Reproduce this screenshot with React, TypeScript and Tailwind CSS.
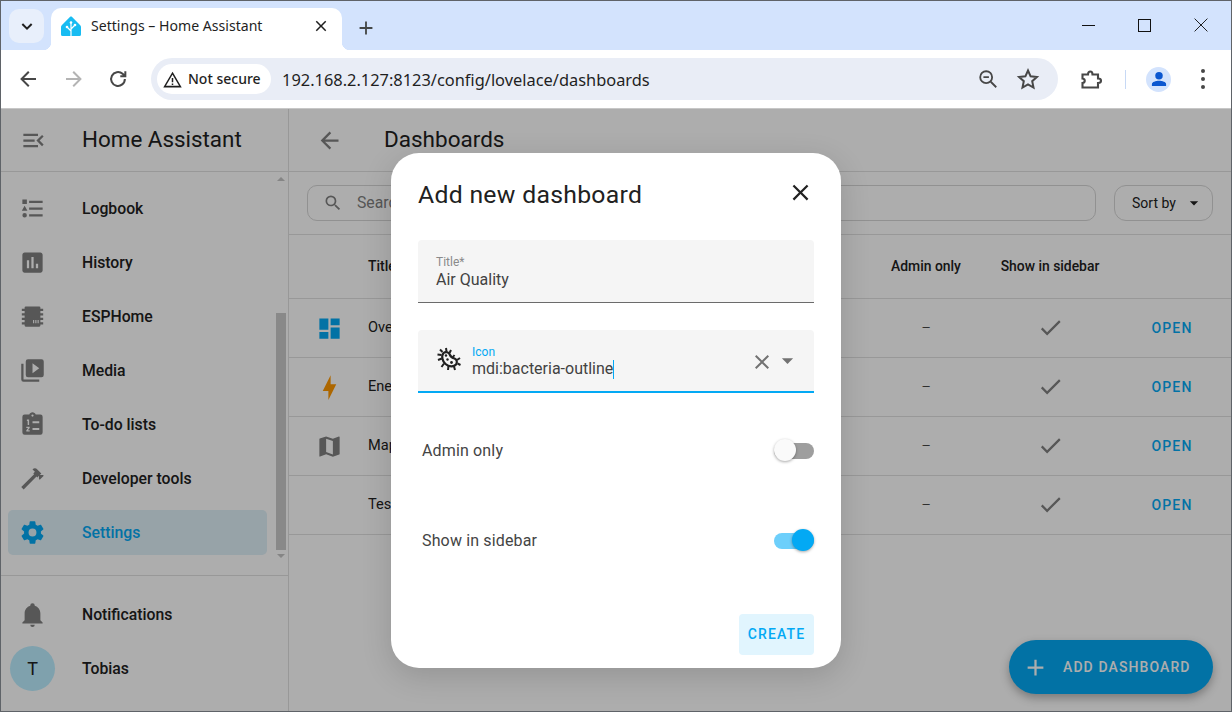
import type { ReactNode } from 'react'

const mdi = {
  menuOpen: 'M21,15.61L19.59,17L14.58,12L19.59,7L21,8.39L17.44,12L21,15.61M3,6H16V8H3V6M3,13V11H13V13H3M3,18V16H16V18H3Z',
  logbook: 'M5,9.5L7.5,14H2.5L5,9.5M3,4H7V8H3V4M5,20A2,2 0 0,0 7,18A2,2 0 0,0 5,16A2,2 0 0,0 3,18A2,2 0 0,0 5,20M9,5V7H21V5H9M9,19H21V17H9V19M9,13H21V11H9V13Z',
  history: 'M19 3H5C3.9 3 3 3.9 3 5V19C3 20.1 3.9 21 5 21H19C20.1 21 21 20.1 21 19V5C21 3.9 20.1 3 19 3M9 17H7V10H9V17M13 17H11V7H13V17M17 17H15V13H17V17Z',
  chip: 'M6 3H18A1 1 0 0 1 19 4V5H21.5V7H19V9H21.5V11H19V13H21.5V15H19V17H21.5V19H19V20A1 1 0 0 1 18 21H6A1 1 0 0 1 5 20V19H2.5V17H5V15H2.5V13H5V11H2.5V9H5V7H2.5V5H5V4A1 1 0 0 1 6 3M12.5 15V18H13.5V15H12.5M14.5 15V18H15.5V15H14.5M16.5 15V18H17.5V15H16.5Z',
  media: 'M4,6H2V20A2,2 0 0,0 4,22H18V20H4V6M20,2H8A2,2 0 0,0 6,4V16A2,2 0 0,0 8,18H20A2,2 0 0,0 22,16V4A2,2 0 0,0 20,2M12,14.5V5.5L18,10L12,14.5Z',
  todo: 'M19,3H14.82C14.4,1.84 13.3,1 12,1C10.7,1 9.6,1.84 9.18,3H5A2,2 0 0,0 3,5V19A2,2 0 0,0 5,21H19A2,2 0 0,0 21,19V5A2,2 0 0,0 19,3M12,3A1,1 0 0,1 13,4A1,1 0 0,1 12,5A1,1 0 0,1 11,4A1,1 0 0,1 12,3M7,7.5H9V12.5H7.7V8.8H7V7.5M12,9H18V10.8H12V9M6.5,14H9.5V15.2L7.9,17H9.5V18.2H6.5V17.1L8.1,15.2H6.5V14M12,15H18V16.8H12V15Z',
  hammer: 'M2 19.63L13.43 8.2L12.72 7.5L14.14 6.07L12 3.89C13.2 2.7 15.09 2.7 16.27 3.89L19.87 7.5L18.45 8.91H21.29L22 9.62L18.45 13.21L17.74 12.5V9.62L16.27 11.04L15.56 10.33L4.13 21.76L2 19.63Z',
  cog: 'M12,15.5A3.5,3.5 0 0,1 8.5,12A3.5,3.5 0 0,1 12,8.5A3.5,3.5 0 0,1 15.5,12A3.5,3.5 0 0,1 12,15.5M19.43,12.97C19.47,12.65 19.5,12.33 19.5,12C19.5,11.67 19.47,11.34 19.43,11L21.54,9.37C21.73,9.22 21.78,8.95 21.66,8.73L19.66,5.27C19.54,5.05 19.27,4.96 19.05,5.05L16.56,6.05C16.04,5.66 15.5,5.32 14.87,5.07L14.5,2.42C14.46,2.18 14.25,2 14,2H10C9.75,2 9.54,2.18 9.5,2.42L9.13,5.07C8.5,5.32 7.96,5.66 7.44,6.05L4.95,5.05C4.73,4.96 4.46,5.05 4.34,5.27L2.34,8.73C2.21,8.95 2.27,9.22 2.46,9.37L4.57,11C4.53,11.34 4.5,11.67 4.5,12C4.5,12.33 4.53,12.65 4.57,12.97L2.46,14.63C2.27,14.78 2.21,15.05 2.34,15.27L4.34,18.73C4.46,18.95 4.73,19.03 4.95,18.95L7.44,17.94C7.96,18.34 8.5,18.68 9.13,18.93L9.5,21.58C9.54,21.82 9.75,22 10,22H14C14.25,22 14.46,21.82 14.5,21.58L14.87,18.93C15.5,18.67 16.04,18.34 16.56,17.94L19.05,18.95C19.27,19.03 19.54,18.95 19.66,18.73L21.66,15.27C21.78,15.05 21.73,14.78 21.54,14.63L19.43,12.97Z',
  bell: 'M21,19V20H3V19L5,17V11C5,7.9 7.03,5.17 10,4.29C10,4.19 10,4.1 10,4A2,2 0 0,1 12,2A2,2 0 0,1 14,4C14,4.1 14,4.19 14,4.29C16.97,5.17 19,7.9 19,11V17L21,19M14,21A2,2 0 0,1 12,23A2,2 0 0,1 10,21',
  dashboard: 'M13,3V9H21V3M13,21H21V11H13M3,21H11V15H3M3,13H11V3H3V13Z',
  bolt: 'M11 15H6L13 1V9H18L11 23V15Z',
  map: 'M15,19L9,16.89V5L15,7.11M20.5,3C20.44,3 20.39,3 20.34,3L15,5.1L9,3L3.36,4.9C3.15,4.97 3,5.15 3,5.38V20.5A0.5,0.5 0 0,0 3.5,21C3.55,21 3.61,21 3.66,20.97L9,18.9L15,21L20.64,19.1C20.85,19 21,18.85 21,18.62V3.5A0.5,0.5 0 0,0 20.5,3Z',
  check: 'M21,7L9,19L3.5,13.5L4.91,12.09L9,16.17L19.59,5.59L21,7Z',
  magnify: 'M9.5,3A6.5,6.5 0 0,1 16,9.5C16,11.11 15.41,12.59 14.44,13.73L14.71,14H15.5L20.5,19L19,20.5L14,15.5V14.71L13.73,14.44C12.59,15.41 11.11,16 9.5,16A6.5,6.5 0 0,1 3,9.5A6.5,6.5 0 0,1 9.5,3M9.5,5C7,5 5,7 5,9.5C5,12 7,14 9.5,14C12,14 14,12 14,9.5C14,7 12,5 9.5,5Z',
  arrowLeft: 'M20,11V13H8L13.5,18.5L12.08,19.92L4.16,12L12.08,4.08L13.5,5.5L8,11H20Z',
  close: 'M19,6.41L17.59,5L12,10.59L6.41,5L5,6.41L10.59,12L5,17.59L6.41,19L12,13.41L17.59,19L19,17.59L13.41,12L19,6.41Z',
  plus: 'M19,13H13V19H11V13H5V11H11V5H13V11H19V13Z',
  menuDown: 'M7,10L12,15L17,10H7Z',
}

function Mdi({ d, className }: { d: string; className: string }) {
  return (
    <svg viewBox="0 0 24 24" className={className} fill="currentColor">
      <path d={d} />
    </svg>
  )
}

function Stroke({ className, width = 2, children }: { className: string; width?: number; children: ReactNode }) {
  return (
    <svg viewBox="0 0 24 24" className={className} fill="none" stroke="currentColor" strokeWidth={width}>
      {children}
    </svg>
  )
}

function BacteriaIcon() {
  return (
    <svg viewBox="0 0 24 24" className="size-[24px] text-[#212121]" fill="none" stroke="currentColor">
      <path
        strokeWidth="2.2"
        d="M6.5 6C9 4 12 5.5 13 8C13.8 10 15.5 11 17.5 11.5C20 12.5 20.5 15.5 19 17.5C17 20 12 20 8.5 17C5.5 14.5 4 9 6.5 6Z"
      />
      <path
        strokeWidth="2"
        d="M3 2.5L5.5 5M9 1L9.5 4.5M14 3L12.5 6M17.5 8L15.5 10.5M23 11L20 13M23.5 18L20.5 16.5M18 23L17 19.5M11 23L11.5 19M4.5 20L7 16.5M1 13L4.8 11.5M0.5 7.5L4.5 8"
      />
      <circle cx="9" cy="8.5" r="1.2" fill="currentColor" stroke="none" />
      <circle cx="10.5" cy="12.5" r="1.2" fill="currentColor" stroke="none" />
      <circle cx="14.5" cy="15.5" r="1.4" fill="currentColor" stroke="none" />
    </svg>
  )
}

function HomeAssistantLogo() {
  return (
    <svg viewBox="0 0 20 20" className="size-[20px] shrink-0">
      <path d="M8.9 1L1 8.9C0.3 9.6 0 10.2 0 11V18.5A1.5 1.5 0 0 0 1.5 20H18.5A1.5 1.5 0 0 0 20 18.5V11C20 10.2 19.7 9.6 19 8.9L11.1 1C10.5 0.4 9.5 0.4 8.9 1Z" fill="#18bcf2" />
      <path d="M10 20V6M10 15L6 11M10 13L14 9" stroke="white" strokeWidth="1.2" fill="none" />
      <circle cx="10" cy="6.5" r="1.3" fill="white" />
      <circle cx="6" cy="11" r="1.3" fill="white" />
      <circle cx="14" cy="9" r="1.3" fill="white" />
    </svg>
  )
}

function TabStrip() {
  return (
    <div className="flex h-[49px] shrink-0 items-end bg-[#d3e3fd] pl-[8px]">
      <div className="mb-[7px] flex h-[34px] w-[35px] items-center justify-center rounded-[10px] bg-[#e8effb]">
        <Stroke className="size-[16px] text-[#1f1f1f]" width={3}>
          <path d="M5 9L12 16L19 9" />
        </Stroke>
      </div>
      <div className="relative ml-[7px] flex h-[42px] w-[291px] items-center rounded-t-[10px] bg-white pr-[12px] pb-[6px] pl-[10px]">
        <div className="absolute bottom-0 -left-[8px] size-[8px] bg-[radial-gradient(circle_at_0_0,transparent_8px,white_8.5px)]" />
        <div className="absolute -right-[8px] bottom-0 size-[8px] bg-[radial-gradient(circle_at_100%_0,transparent_8px,white_8.5px)]" />
        <HomeAssistantLogo />
        <span className="ml-[10px] flex-1 font-['Noto_Sans',sans-serif] text-[14.1px] text-[#1f1f1f]">
          Settings – Home Assistant
        </span>
        <Mdi d={mdi.close} className="size-[18px] text-[#1f1f1f]" />
      </div>
      <div className="mb-[12px] ml-[14px] flex size-[20px] items-center justify-center">
        <Mdi d={mdi.plus} className="size-[22px] shrink-0 text-[#444746]" />
      </div>
      <div className="mb-[18px] ml-auto flex items-center gap-[43px] pr-[23px] text-[#111]">
        <div className="h-px w-[13px] bg-[#111]" />
        <div className="size-[13px] border border-[#111]" />
        <Stroke className="size-[14px]" width={1.6}>
          <path d="M1 1L23 23M23 1L1 23" />
        </Stroke>
      </div>
    </div>
  )
}

function Toolbar() {
  return (
    <div className="relative z-10 flex h-[59px] shrink-0 items-center rounded-t-[9px] border-b border-[#c7c7c7] bg-white pr-[16px] pl-[16px] text-[#474747]">
      <Mdi d={mdi.arrowLeft} className="-ml-[1px] size-[24px] shrink-0" />
      <Mdi d={mdi.arrowLeft} className="ml-[22px] size-[24px] shrink-0 rotate-180 text-[#b4b4b4]" />
      <Stroke className="ml-[21px] size-[22px] shrink-0" width={2.2}>
        <path d="M19.5 12A7.5 7.5 0 1 1 17 6.4L20 9M20 3.5V9H14.5" />
      </Stroke>
      <div className="ml-[22px] flex h-[42px] w-[907px] items-center rounded-full bg-[#e9edf6] pr-[18px] pl-[6px]">
        <div className="flex h-[30px] w-[114px] items-center rounded-full bg-white pl-[6px]">
          <Stroke className="size-[19px] shrink-0 text-[#1f1f1f]" width={1.9}>
            <path d="M12 4L22 21H2ZM12 10V15.5M12 17V19" />
          </Stroke>
          <span className="ml-[6px] pb-[2px] font-['Noto_Sans',sans-serif] text-[14px] font-medium whitespace-nowrap text-[#1f1f1f]">
            Not secure
          </span>
        </div>
        <span className="ml-[11px] flex-1 pt-[3px] font-['Noto_Sans',sans-serif] text-[16.4px] whitespace-nowrap text-[#1f1f1f]">
          192.168.2.127:8123/config/lovelace/dashboards
        </span>
        <Stroke className="size-[22px] shrink-0 translate-x-[1px]" width={2}>
          <circle cx="10" cy="10" r="6.5" />
          <path d="M7 10H13M15 15L21 21" />
        </Stroke>
        <svg viewBox="0 0 24 24" className="ml-[18px] size-[24px] shrink-0" fill="none" stroke="currentColor" strokeWidth="2">
          <path d="M12 3.5L14.6 9.3L20.9 10L16.2 14.2L17.5 20.5L12 17.3L6.5 20.5L7.8 14.2L3.1 10L9.4 9.3Z" />
        </svg>
      </div>
      <Stroke className="ml-[21px] size-[24px] shrink-0" width={2.1}>
        <path d="M3.5 7.5H9C9 3.5 13.5 3.5 13.5 7.5H19V11.5C23 11.5 23 16 19 16V20.5H3.5V16C6.5 15.5 6.5 12 3.5 11.5Z" />
      </Stroke>
      <div className="ml-[22px] h-[19px] w-px bg-[#c7d9f5]" />
      <div className="ml-[20px] flex size-[25px] shrink-0 items-center justify-center overflow-hidden rounded-full bg-[#d3e3fd]">
        <svg viewBox="0 0 24 24" className="size-[20px] text-[#0b57d0]" fill="currentColor">
          <circle cx="12" cy="8" r="4.5" />
          <path d="M3.5 20.5V18C3.5 15.5 8 14 12 14C16 14 20.5 15.5 20.5 18V20.5Z" />
        </svg>
      </div>
      <div className="ml-[30px] flex flex-col gap-[4px]">
        <div className="size-[4px] rounded-full bg-[#474747]" />
        <div className="size-[4px] rounded-full bg-[#474747]" />
        <div className="size-[4px] rounded-full bg-[#474747]" />
      </div>
    </div>
  )
}

const navItems = [
  { label: 'Logbook', icon: mdi.logbook },
  { label: 'History', icon: mdi.history },
  { label: 'ESPHome', icon: mdi.chip },
  { label: 'Media', icon: mdi.media },
  { label: 'To-do lists', icon: mdi.todo },
  { label: 'Developer tools', icon: mdi.hammer },
  { label: 'Settings', icon: mdi.cog, active: true },
]

function NavItem({ label, icon, active }: { label: string; icon: string; active?: boolean }) {
  return (
    <div className={`flex h-[45px] items-center gap-[36px] rounded-[5px] pl-[11px] ${active ? 'bg-[#dff0f8] text-[#03a9f4]' : 'text-[#212121]'}`}>
      <Mdi d={icon} className={`size-[27px] shrink-0 ${active ? 'text-[#03a9f4]' : 'text-[#808080]'}`} />
      <span className="text-[15.75px] font-medium">{label}</span>
    </div>
  )
}

function Sidebar() {
  return (
    <aside className="flex w-[288px] shrink-0 flex-col border-r border-[#e0e0e0]">
      <div className="flex h-[63px] shrink-0 items-center gap-[35px] border-b border-[#e0e0e0] pl-[19px]">
        <Mdi d={mdi.menuOpen} className="size-[27px] text-[#808080]" />
        <span className="text-[22.4px] text-[#212121]">Home Assistant</span>
      </div>
      <div className="flex h-[404px] shrink-0 border-b border-[#e0e0e0]">
        <div className="ml-[7px] flex w-[259px] flex-col gap-[9px] pt-[14px]">
          {navItems.map((item) => (
            <NavItem key={item.label} {...item} />
          ))}
        </div>
        <div className="ml-[8px] flex w-[11px] flex-col items-center pt-[5px]">
          <div className="h-0 w-0 border-x-[4px] border-b-[4px] border-x-transparent border-b-[#c4c4c4]" />
          <div className="mt-[132px] h-[237px] w-[10px] shrink-0 bg-[#cacaca]" />
          <div className="mt-[4px] h-0 w-0 border-x-[4px] border-t-[4px] border-x-transparent border-t-[#c4c4c4]" />
        </div>
      </div>
      <div className="flex flex-col gap-[9px] pt-[16px] pl-[7px]">
        <NavItem label="Notifications" icon={mdi.bell} />
        <div className="flex h-[45px] items-center gap-[27px] pl-[2px]">
          <div className="flex size-[45px] items-center justify-center rounded-full bg-[#bbeeff] text-[18px] text-[#212121]">
            T
          </div>
          <span className="text-[15.75px] font-medium text-[#212121]">Tobias</span>
        </div>
      </div>
    </aside>
  )
}

const rows = [
  { title: 'Overview', icon: mdi.dashboard, color: 'text-[#03a9f4]' },
  { title: 'Energy', icon: mdi.bolt, color: 'text-[#ff9800]' },
  { title: 'Map', icon: mdi.map, color: 'text-[#808080]' },
  { title: 'Test', icon: '', color: '' },
]

function Row({ title, icon, color }: { title: string; icon: string; color: string }) {
  return (
    <div className="flex h-[59px] items-center border-b border-[#e0e0e0] text-[14.6px] text-[#212121]">
      <div className="flex w-[79px] justify-center pl-[1px]">
        {icon && <Mdi d={icon} className={`size-[27px] ${color}`} />}
      </div>
      <div className="flex-1">{title}</div>
      <div className="flex w-[122px] justify-center text-[11px] text-[#333]">—</div>
      <div className="flex w-[126px] justify-center pb-[2px]">
        <Mdi d={mdi.check} className="size-[27px] text-[#808080]" />
      </div>
      <div className="flex w-[118px] justify-center text-[14px] font-medium tracking-[1.2px] text-[#03a9f4]">OPEN</div>
    </div>
  )
}

function Main() {
  return (
    <main className="relative flex-1">
      <div className="flex h-[63px] items-center gap-[41px] border-b border-[#e0e0e0] pl-[27px]">
        <Mdi d={mdi.arrowLeft} className="size-[27px] text-[#808080]" />
        <span className="text-[22.5px] text-[#212121]">Dashboards</span>
      </div>
      <div className="flex h-[63px] items-center gap-[18px] border-b border-[#e0e0e0] px-[18px]">
        <div className="flex h-[36px] flex-1 items-center gap-[14px] rounded-[10px] border border-[#d6d6d6] pl-[15px]">
          <Mdi d={mdi.magnify} className="size-[20px] text-[#808080]" />
          <span className="text-[15.75px] text-[#808080]">Search</span>
        </div>
        <div className="flex h-[36px] w-[99px] items-center rounded-[12px] border border-[#d6d6d6] pl-[17px]">
          <span className="text-[14px] text-[#212121]">Sort by</span>
          <Mdi d={mdi.menuDown} className="ml-[8px] size-[20px] text-[#212121]" />
        </div>
      </div>
      <div className="flex h-[64px] items-center border-b border-[#e0e0e0] text-[13.9px] font-medium text-[#212121]">
        <div className="w-[79px]" />
        <div className="flex-1">Title</div>
        <div className="flex w-[122px] justify-center">Admin only</div>
        <div className="flex w-[126px] justify-center">Show in sidebar</div>
        <div className="w-[118px]" />
      </div>
      {rows.map((row) => (
        <Row key={row.title} {...row} />
      ))}
      <div className="absolute right-[18px] bottom-[17px] flex h-[54px] w-[204px] items-center rounded-full bg-[#03a9f4] pl-[13px] text-white shadow-[0_4px_10px_rgba(0,0,0,0.3)]">
        <Mdi d={mdi.plus} className="size-[27px]" />
        <span className="ml-[14px] text-[14px] font-medium tracking-[1.1px]">ADD DASHBOARD</span>
      </div>
    </main>
  )
}

function Switch({ on }: { on?: boolean }) {
  return (
    <div className={`relative h-[16px] w-[40px] rounded-full ${on ? 'bg-[#6dcffb]' : 'bg-[#9e9e9e]'}`}>
      <div
        className={`absolute -top-[4px] size-[22px] rounded-full shadow-[0_1px_3px_rgba(0,0,0,0.35)] ${on ? 'right-0 bg-[#03a9f4]' : 'left-0 bg-[#fafafa]'}`}
      />
    </div>
  )
}

function Dialog() {
  return (
    <div className="flex h-[515px] w-[450px] flex-col rounded-[28px] bg-white px-[27px] pt-[26px] shadow-[0_8px_30px_rgba(0,0,0,0.15)]">
      <div className="flex h-[32px] items-center justify-between">
        <span className="text-[24.75px] tracking-[0.3px] text-[#212121]">Add new dashboard</span>
        <Mdi d={mdi.close} className="mb-[4px] size-[27px] text-[#212121]" />
      </div>
      <div className="mt-[29px] h-[63px] rounded-t-[4px] border-b border-[#6b6b6b] bg-[#f5f5f5] pt-[15px] pl-[18px]">
        <div className="text-[12px] leading-[14px] text-[#8a8a8a]">Title*</div>
        <div className="mt-[2px] text-[16px] leading-[18px] text-[#424242]">Air Quality</div>
      </div>
      <div className="mt-[27px] flex h-[63px] rounded-t-[4px] border-b-2 border-[#03a9f4] bg-[#f5f5f5] pl-[19px]">
        <div className="pt-[17px]">
          <BacteriaIcon />
        </div>
        <div className="ml-[11px] flex-1 pt-[15px]">
          <div className="text-[12px] leading-[14px] text-[#03a9f4]">Icon</div>
          <div className="mt-[1px] flex items-center text-[16px] leading-[18px] text-[#424242]">
            mdi:bacteria-outline
            <span className="h-[19px] w-px bg-[#03a9f4]" />
          </div>
        </div>
        <div className="flex items-center pr-[13px]">
          <Mdi d={mdi.close} className="mt-[4px] size-[24px] text-[#727272]" />
          <Mdi d={mdi.menuDown} className="size-[27px] text-[#727272]" />
        </div>
      </div>
      <div className="mt-[13px] flex h-[90px] items-center justify-between pl-[4px] text-[16px] tracking-[0.15px] text-[#444]">
        Admin only
        <Switch />
      </div>
      <div className="flex h-[90px] items-center justify-between pl-[4px] text-[16px] tracking-[0.15px] text-[#444]">
        Show in sidebar
        <Switch on />
      </div>
      <div className="mt-[28px] flex justify-end">
        <div className="flex h-[41px] w-[75px] items-center justify-center rounded-[4px] bg-[#e1f5fe] text-[14px] font-medium tracking-[1.1px] text-[#03a9f4]">
          CREATE
        </div>
      </div>
    </div>
  )
}

export default function App() {
  return (
    <div className="flex h-[712px] w-[1232px] flex-col overflow-hidden border border-[#5f6368] bg-white font-['Roboto',sans-serif]">
      <TabStrip />
      <Toolbar />
      <div className="relative flex flex-1">
        <Sidebar />
        <Main />
        <div className="absolute inset-0 flex items-center justify-center bg-black/32">
          <Dialog />
        </div>
      </div>
    </div>
  )
}
